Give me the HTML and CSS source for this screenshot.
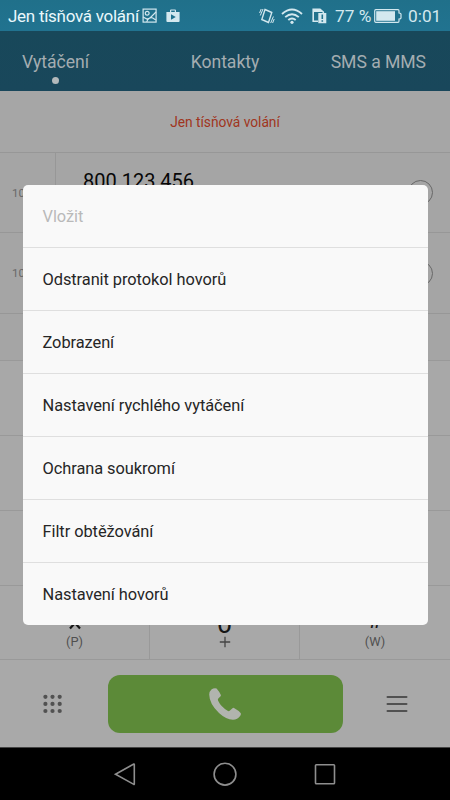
FILE: index.html
```html
<!DOCTYPE html>
<html lang="cs">
<head>
<meta charset="utf-8">
<title>Vytáčení</title>
<link rel="stylesheet" href="styles.css">
</head>
<body>
<div class="phone">
  <header class="status">
    <span class="carrier">Jen tísňová volání</span>
    <svg class="i-picture" width="16" height="16" viewBox="0 0 16 16" fill="none" stroke="currentColor" stroke-width="1.2"><rect x="1.1" y="1.1" width="13" height="13"/><circle cx="5.2" cy="5.2" r="1.9"/><path d="M1 9l4 2 3-1 6-6M4.800 14c.5-3 3-5 6-4l3 2"/></svg>
    <svg class="i-store" width="14" height="14" viewBox="0 0 14 14"><path fill="currentColor" fill-rule="evenodd" d="M4 3V1.600Q4 .5 5.100.5H9Q10 .5 10 1.600V3h3.600V12Q13.600 13 12.600 13H1.400Q.4 13 .4 12V3zM5.200 3H8.800V1.600H5.200zM5 5.200V10.800L9.800 8z"/></svg>
    <span class="spacer"></span>
    <svg class="i-vibrate" width="16" height="18" viewBox="0 0 16 18" fill="none" stroke="currentColor" stroke-width="1.400"><path d="M6 2.500L12.800 5.500 9.500 15.500 2.800 12.500z"/><path stroke-width="1" d="M4 2L1.300 8.500M2.200 2L.6 6M11.700 16L14.400 9.500M13.600 16L15.200 12"/></svg>
    <svg class="i-wifi" width="22" height="17" viewBox="0 0 22 17" fill="none" stroke="currentColor" stroke-width="1.900"><path d="M1 6Q11-2.800 21 6M4.200 9.100Q11 3.200 17.800 9.100M7.300 12Q11 8.800 14.700 12"/><circle cx="11" cy="14.300" r="1.600" fill="currentColor" stroke="none"/></svg>
    <svg class="i-sim" width="15" height="16" viewBox="0 0 15 16"><path d="M6 13.200H1.200V1.200H8L11.300 4V5" fill="none" stroke="currentColor" stroke-width="1.600"/><path fill="currentColor" fill-rule="evenodd" d="M1 1H8L11 4H1zM6.300 5H14.300V15.300H6.300zM9.500 6.500V11H11.100V6.500zM9.500 12.200V13.700H11.100V12.200z"/></svg>
    <span class="percent">77 %</span>
    <svg class="i-battery" width="28" height="14" viewBox="0 0 28 14"><path d="M1.800.7H24Q25 .7 25 2V4Q27 4 27 5V9Q27 10 25 10V12Q25 13.300 24 13.300H1.800Q.7 13.300.7 12V2Q.7.7 1.800.7z" fill="none" stroke="currentColor" stroke-width="1.200"/><rect x="2.200" y="2.200" width="18.800" height="9.600" fill="currentColor"/></svg>
    <span class="clock">0:01</span>
  </header>
  <nav class="tabs">
    <div class="tab active">Vytáčení</div>
    <div class="tab">Kontakty</div>
    <div class="tab last-tab">SMS a MMS</div>
  </nav>
  <div class="notice">Jen tísňová volání</div>
  <section class="calls">
    <div class="call first"><span class="date">10</span><span class="number">800 123 456</span><span class="info"></span></div>
    <div class="call"><span class="date">10</span><span class="number"></span><span class="info"></span></div>
    <div class="call last"></div>
  </section>
  <section class="keypad">
    <div class="key-row"></div>
    <div class="key-row"></div>
    <div class="key-row"></div>
    <div class="key-row keys">
      <div class="key"><svg width="14" height="13" viewBox="0 0 14 13" fill="none" stroke="currentColor" stroke-width="2.200"><path d="M7 0V6M1 4L7 6 13 4M7 6L2 11.500M7 6L12 11.500"/></svg><span>(P)</span></div>
      <div class="key"><b>0</b><svg class="plus" width="12" height="12" viewBox="0 0 12 12" fill="none" stroke="currentColor" stroke-width="1.300"><path d="M6 .8V11.200M.8 6H11.200"/></svg></div>
      <div class="key"><b class="hash">#</b><span>(W)</span></div>
    </div>
  </section>
  <section class="actions">
    <svg class="i-pad" width="20" height="20" viewBox="0 0 20 20" fill="currentColor"><circle cx="2.400" cy="2.800" r="2.100"/><circle cx="9.500" cy="2.800" r="2.100"/><circle cx="16.700" cy="2.800" r="2.100"/><circle cx="2.400" cy="9.900" r="2.100"/><circle cx="9.500" cy="9.900" r="2.100"/><circle cx="16.700" cy="9.900" r="2.100"/><circle cx="2.400" cy="17" r="2.100"/><circle cx="9.500" cy="17" r="2.100"/><circle cx="16.700" cy="17" r="2.100"/></svg>
    <div class="dial"><svg width="34" height="34" viewBox="0 0 34 34"><path fill="currentColor" d="M3.400 2.500Q6 .6 8.600 1.400Q11 4 13 8.200Q13 9 10.500 11.200Q9.500 12 10 13.500Q13 20 20 24Q21.500 24.500 22.500 23L24.500 21.200Q25.200 20.500 26 20.900Q31 23.600 32.800 26.200Q33.300 27 32.300 28.800Q29.500 32.800 25 32.800Q18 32.500 11 26Q1.400 17 1.200 7.500Q1.200 4.500 3.400 2.500z"/></svg></div>
    <svg class="i-menu" width="22" height="18" viewBox="0 0 22 18" stroke="currentColor" stroke-width="2" stroke-linecap="round"><path d="M1.500 1.900H20.500M1.500 9H20.500M1.500 16.100H20.500"/></svg>
  </section>
  <footer class="system">
    <svg width="24" height="26" viewBox="0 0 24 26"><path d="M2.500 13.200L20.800 3Q21.300 2.800 21.300 3.500V22.900Q21.300 23.600 20.800 23.400z"/></svg>
    <svg width="26" height="26" viewBox="0 0 26 26"><circle cx="13" cy="13.200" r="10.900"/></svg>
    <svg width="24" height="26" viewBox="0 0 24 26"><rect x="2.500" y="3.800" width="19" height="19" rx=".8"/></svg>
  </footer>
  <ul class="menu">
    <li class="disabled">Vložit</li>
    <li>Odstranit protokol hovorů</li>
    <li>Zobrazení</li>
    <li>Nastavení rychlého vytáčení</li>
    <li>Ochrana soukromí</li>
    <li>Filtr obtěžování</li>
    <li>Nastavení hovorů</li>
  </ul>
</div>
</body>
</html>
```
FILE: styles.css
```css
* { box-sizing: border-box; }
body { margin: 0; font-family: Roboto, sans-serif; }
svg { display: block; flex: none; }
.phone { position: relative; width: 450px; height: 800px; overflow: hidden; display: flex; flex-direction: column; background: #a6a6a6; }
.status { flex: none; height: 31px; display: flex; align-items: center; padding: 1px 9px 0 8px; color: #d3e8ef; background: linear-gradient(#20708a, #217390); font-size: 17.3px; white-space: nowrap; }
.carrier { width: 134px; color: #e9f8fc; font-size: 17px; letter-spacing: -0.28px; }
.i-store { margin-left: 8px; }
.spacer { flex: 1; }
.i-wifi { margin-left: 6px; }
.i-sim { margin-left: 9px; }
.percent { width: 38px; margin-left: 8px; }
.i-battery { margin-left: 1px; }
.clock { width: 33px; margin-left: 6px; }
.tabs { flex: none; height: 60px; display: grid; grid-template-columns: 111px 228px 111px; background: linear-gradient(#18485a, #19475b); color: #a4adb1; font-size: 17.6px; letter-spacing: -0.05px; line-height: 62px; text-align: center; white-space: nowrap; }
.last-tab { padding-right: 24px; margin-left: -20px; text-align: right; }
.active { position: relative; }
.active::after { content: ""; position: absolute; left: 52px; top: 46px; width: 7px; height: 7px; border-radius: 50%; background: #b3b9bb; }
.notice { flex: none; height: 61px; line-height: 63px; text-align: center; color: #a03520; font-size: 13.8px; letter-spacing: -0.03px; }
.calls { flex: none; height: 208px; background: #a5a5a5; }
.call { height: 81px; border-top: 1px solid #979797; display: flex; align-items: center; padding-right: 17px; }
.first { height: 80px; }
.date { width: 56px; height: 100%; border-right: 1px solid #979797; padding-left: 12px; line-height: 80px; font-size: 11.5px; color: #686868; }
.number { flex: 1; align-self: flex-start; padding: 16px 0 0 27px; font-size: 20px; color: #080808; }
.info { width: 25px; height: 25px; border: 1px solid #686868; border-radius: 50%; }
.last { height: 47px; }
.keypad { flex: none; height: 299px; background: #a8a8a8; }
.key-row { height: 75px; border-top: 1px solid #999; }
.keys { display: grid; grid-template-columns: 150px 150px 150px; height: 74px; }
.key { height: 73px; padding-top: 31px; display: flex; flex-direction: column; align-items: center; color: #151515; border-right: 1px solid #999; }
.key:last-child { border-right: 0; }
.key b { height: 16px; line-height: 14px; font-size: 27px; font-weight: 400; }
.key > svg { height: 13px; }
.key span { margin-top: 4px; font-size: 12.8px; line-height: 15px; color: #505050; }
.key .hash { height: 13px; line-height: 7px; font-size: 24px; }
.key .plus { height: 12px; margin-top: 3px; color: #444; }
.actions { flex: none; height: 88px; display: flex; align-items: center; padding: 1px 0 0 43px; border-top: 1px solid #999; background: #a9a9a9; color: #515151; }
.dial { width: 235px; height: 58px; margin-left: 44.5px; border-radius: 12px; background: #5c8a38; color: #b1b4ae; display: flex; align-items: center; justify-content: center; }
.i-menu { margin-left: 43.5px; }
.system { flex: none; height: 53px; display: flex; align-items: center; justify-content: center; gap: 75px; border-top: 1px solid #444; background: #000; }
.system svg { fill: none; stroke: #8e8e8e; stroke-width: 1.6; }
.menu { position: absolute; left: 22.5px; top: 185px; width: 405px; height: 440px; margin: 0; padding: 0; list-style: none; border-radius: 5px; background: #f9f9f9; color: #262626; font-size: 16.4px; letter-spacing: -0.06px; overflow: hidden; }
.menu li { height: 63px; padding: 0 20px; line-height: 63px; border-bottom: 1px solid #dfdfdf; }
.menu li:last-child { border: 0; }
.menu .disabled { color: #b9b9b9; }
```
